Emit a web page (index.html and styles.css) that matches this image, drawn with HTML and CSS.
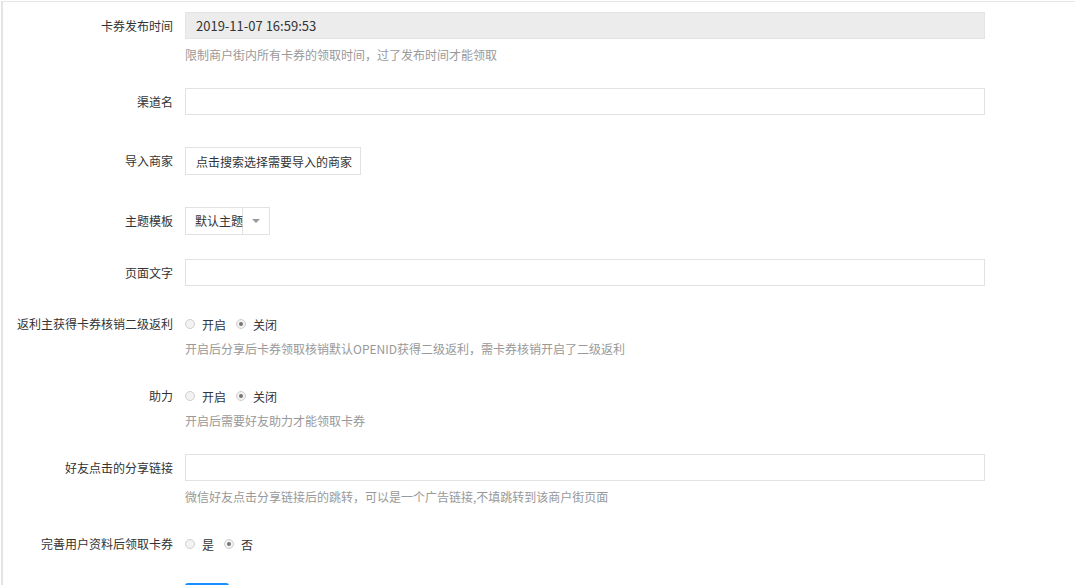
FILE: index.html
```html
<!DOCTYPE html>
<html lang="zh-CN">
<head>
    <meta charset="UTF-8">
    <meta name="viewport" content="width=device-width, initial-scale=1.0">
    <title>商户街设置</title>
    <link rel="stylesheet" href="styles.css">
</head>
<body>
    <div class="page">
        <form class="form">
            <div class="form-group">
                <label class="form-label">卡券发布时间</label>
                <div class="form-field">
                    <input type="text" class="form-input form-input-disabled" value="2019-11-07 16:59:53" disabled>
                    <p class="help">限制商户街内所有卡券的领取时间，过了发布时间才能领取</p>
                </div>
            </div>

            <div class="form-group form-group-lg">
                <label class="form-label">渠道名</label>
                <div class="form-field">
                    <input type="text" class="form-input">
                </div>
            </div>

            <div class="form-group form-group-lg">
                <label class="form-label">导入商家</label>
                <div class="form-field">
                    <button type="button" class="btn-search">点击搜索选择需要导入的商家</button>
                </div>
            </div>

            <div class="form-group">
                <label class="form-label">主题模板</label>
                <div class="form-field">
                    <div class="select">
                        <span class="select-value">默认主题</span>
                        <span class="select-arrow"></span>
                    </div>
                </div>
            </div>

            <div class="form-group">
                <label class="form-label">页面文字</label>
                <div class="form-field">
                    <input type="text" class="form-input">
                </div>
            </div>

            <div class="form-group">
                <label class="form-label">返利主获得卡券核销二级返利</label>
                <div class="form-field">
                    <div class="radio-group">
                        <span class="radio"><i class="radio-dot"></i>开启</span>
                        <span class="radio"><i class="radio-dot checked"></i>关闭</span>
                    </div>
                    <p class="help help-tight">开启后分享后卡券领取核销默认OPENID获得二级返利，需卡券核销开启了二级返利</p>
                </div>
            </div>

            <div class="form-group">
                <label class="form-label">助力</label>
                <div class="form-field">
                    <div class="radio-group">
                        <span class="radio"><i class="radio-dot"></i>开启</span>
                        <span class="radio"><i class="radio-dot checked"></i>关闭</span>
                    </div>
                    <p class="help help-tight">开启后需要好友助力才能领取卡券</p>
                </div>
            </div>

            <div class="form-group">
                <label class="form-label">好友点击的分享链接</label>
                <div class="form-field">
                    <input type="text" class="form-input">
                    <p class="help">微信好友点击分享链接后的跳转，可以是一个广告链接,不填跳转到该商户街页面</p>
                </div>
            </div>

            <div class="form-group form-group-last">
                <label class="form-label">完善用户资料后领取卡券</label>
                <div class="form-field">
                    <div class="radio-group">
                        <span class="radio"><i class="radio-dot"></i>是</span>
                        <span class="radio"><i class="radio-dot checked"></i>否</span>
                    </div>
                </div>
            </div>

            <div class="form-group">
                <span class="form-label"></span>
                <div class="form-field">
                    <button type="submit" class="btn-primary">保存</button>
                </div>
            </div>
        </form>
    </div>
</body>
</html>
```

FILE: styles.css
```css
body {
    margin: 0;
    font-family: "Noto Sans CJK SC", "Noto Sans", sans-serif;
    font-size: 12px;
    color: #333;
    background: #fff;
}

.page {
    margin: 1px 0 0 1px;
    border-top: 1px solid #e6e6e6;
    border-left: 2px solid #e4e4e4;
    padding-top: 10px;
    min-height: 640px;
}

.form-group {
    display: flex;
    align-items: flex-start;
    margin-bottom: 24px;
}

.form-group-lg {
    margin-bottom: 32px;
}

.form-group-last {
    margin-bottom: 25px;
}

.form-label {
    width: 170px;
    flex-shrink: 0;
    margin-right: 12px;
    text-align: right;
    line-height: 27px;
    white-space: nowrap;
}

.form-field {
    flex: 1;
}

.form-input {
    display: block;
    box-sizing: border-box;
    width: 800px;
    height: 27px;
    padding: 0 10px;
    border: 1px solid #e2e2e2;
    background: #fff;
    font-family: inherit;
    font-size: 13px;
    color: #333;
    outline: none;
}

.form-input-disabled {
    background: #ececec;
    border-color: #e4e4e4;
}

.help {
    margin: 7px 0 0;
    line-height: 18px;
    color: #999;
}

.help-tight {
    margin-top: 2px;
}

.btn-search {
    display: block;
    box-sizing: border-box;
    width: 176px;
    height: 28px;
    padding: 0 0 0 10px;
    border: 1px solid #e2e2e2;
    background: #fff;
    font-family: inherit;
    font-size: 12px;
    text-align: left;
    white-space: nowrap;
    color: #333;
}

.select {
    display: flex;
    box-sizing: border-box;
    width: 85px;
    height: 28px;
    border: 1px solid #e2e2e2;
}

.select-value {
    width: 57px;
    padding-left: 9px;
    box-sizing: border-box;
    line-height: 26px;
    border-right: 1px solid #e2e2e2;
    white-space: nowrap;
}

.select-arrow {
    flex: 1;
    position: relative;
}

.select-arrow::after {
    content: "";
    position: absolute;
    left: 9px;
    top: 11px;
    border-left: 4px solid transparent;
    border-right: 4px solid transparent;
    border-top: 4px solid #999;
}

.radio-group {
    display: flex;
    align-items: center;
    height: 28px;
}

.radio {
    display: flex;
    align-items: center;
    margin-right: 10px;
}

.radio-dot {
    position: relative;
    box-sizing: border-box;
    width: 10px;
    height: 10px;
    margin-right: 7px;
    border: 1px solid #cfcfcf;
    border-radius: 50%;
    background: #f2f2f2;
}

.radio-dot.checked::after {
    content: "";
    position: absolute;
    left: 2px;
    top: 2px;
    width: 4px;
    height: 4px;
    border-radius: 50%;
    background: #777;
}

.btn-primary {
    height: 28px;
    padding: 0 10px;
    border: none;
    border-radius: 3px;
    background: #1890ff;
    color: #fff;
    font-family: inherit;
    font-size: 12px;
}
```
